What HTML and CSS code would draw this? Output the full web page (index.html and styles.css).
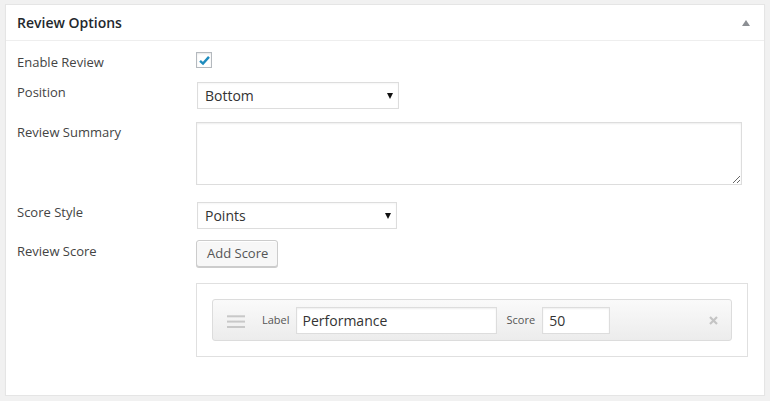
FILE: index.html
```html
<!DOCTYPE html>
<html lang="en">
<head>
<meta charset="utf-8">
<title>Review Options</title>
<link rel="stylesheet" href="styles.css">
</head>
<body>
<div class="panel">
  <div class="panel-head">
    <h2 class="panel-title">Review Options</h2>
    <span class="toggle" aria-hidden="true"></span>
  </div>
  <div class="panel-body">
    <div class="row row-check">
      <label class="lbl">Enable Review</label>
      <div class="field">
        <span class="checkbox">
          <svg width="14" height="14" viewBox="0 0 14 14"><path d="M2.2 6.8 L5.4 9.8 L11.8 2.6" fill="none" stroke="#1e8cbe" stroke-width="2.6" stroke-linecap="butt" stroke-linejoin="miter"/></svg>
        </span>
      </div>
    </div>
    <div class="row row-select">
      <label class="lbl">Position</label>
      <div class="field">
        <div class="select select-wide"><select><option>Bottom</option></select></div>
      </div>
    </div>
    <div class="row row-text">
      <label class="lbl">Review Summary</label>
      <div class="field">
        <textarea class="summary"></textarea>
      </div>
    </div>
    <div class="row row-style">
      <label class="lbl">Score Style</label>
      <div class="field">
        <div class="select select-narrow"><select><option>Points</option></select></div>
      </div>
    </div>
    <div class="row row-button">
      <label class="lbl lbl-down">Review Score</label>
      <div class="field">
        <button class="btn" type="button">Add Score</button>
      </div>
    </div>
    <div class="row row-scores">
      <div class="spacer"></div>
      <div class="scores">
        <div class="score-item">
          <svg class="handle" width="18" height="13" viewBox="0 0 18 13"><rect x="0" y="0.3" width="18" height="2" fill="#c8c8c8"/><rect x="0" y="5.6" width="18" height="2" fill="#c8c8c8"/><rect x="0" y="11" width="18" height="2" fill="#c8c8c8"/></svg>
          <span class="small-lbl lbl-label">Label</span>
          <input class="inp inp-label" type="text" value="Performance">
          <span class="small-lbl lbl-score">Score</span>
          <input class="inp inp-score" type="text" value="50">
          <svg class="remove" width="9" height="9" viewBox="0 0 9 9"><path d="M1 1 L8 8 M8 1 L1 8" stroke="#c4c4c4" stroke-width="2.2" fill="none"/></svg>
        </div>
      </div>
    </div>
  </div>
</div>
</body>
</html>
```

FILE: styles.css
```css
html, body {
  margin: 0;
  padding: 0;
}
body {
  background: #f1f1f1;
  font-family: "Open Sans", "Noto Sans", sans-serif;
  color: #444;
  padding: 4px 5px 0 5px;
  width: 760px;
}
.panel {
  background: #fff;
  border: 1px solid #e5e5e5;
  box-shadow: 0 1px 1px rgba(0,0,0,0.04);
  box-sizing: border-box;
  width: 760px;
}
.panel-head {
  height: 35px;
  border-bottom: 1px solid #eee;
  display: flex;
  align-items: center;
  justify-content: space-between;
  padding: 0 14px 0 11px;
}
.panel-title {
  margin: 0;
  font-size: 14px;
  font-weight: 600;
  line-height: 35px;
  color: #23282d;
}
.toggle {
  width: 0;
  height: 0;
  border-left: 4px solid transparent;
  border-right: 4px solid transparent;
  border-bottom: 6px solid #8c8f94;
  margin-top: 1px;
}
.panel-body {
  padding: 11px 15px 38px 11px;
}
.row {
  display: grid;
  grid-template-columns: 179px 1fr;
  align-items: start;
}
.lbl {
  font-size: 13px;
  line-height: 18px;
  color: #444;
  padding-top: 1px;
}
.row-check { margin-bottom: 11px; }
.row-select { margin-bottom: 13px; }
.row-text { margin-bottom: 17px; }
.row-style { margin-bottom: 11px; }
.row-button { margin-bottom: 16px; }
.lbl-down { padding-top: 2px; }
.checkbox {
  display: flex;
  align-items: center;
  justify-content: center;
  width: 16px;
  height: 16px;
  box-sizing: border-box;
  border: 1px solid #b4b9be;
  background: #fff;
  box-shadow: inset 0 1px 2px rgba(0,0,0,0.1);
}
.checkbox svg {
  display: block;
  margin-left: 1px;
  margin-top: 1px;
}
.select {
  position: relative;
  margin-left: 1px;
  height: 27px;
}
.select-wide { width: 202px; }
.select-narrow { width: 200px; }
.select select {
  appearance: none;
  -webkit-appearance: none;
  width: 100%;
  height: 27px;
  box-sizing: border-box;
  border: 1px solid #ddd;
  background: #fff;
  font-family: "Open Sans", "Noto Sans", sans-serif;
  font-size: 14px;
  color: #333;
  padding: 0 24px 0 7px;
  margin: 0;
  border-radius: 0;
  box-shadow: inset 0 1px 2px rgba(0,0,0,0.04);
  outline: none;
}
.select::after {
  content: "";
  position: absolute;
  right: 6px;
  top: 11px;
  width: 0;
  height: 0;
  border-left: 3.5px solid transparent;
  border-right: 3.5px solid transparent;
  border-top: 6px solid #111;
}
.summary {
  display: block;
  width: 546px;
  height: 63px;
  box-sizing: border-box;
  border: 1px solid #ddd;
  box-shadow: inset 0 1px 2px rgba(0,0,0,0.07);
  margin: 0;
  padding: 4px;
  font-family: "Open Sans", "Noto Sans", sans-serif;
  font-size: 14px;
  resize: both;
}
.btn {
  display: block;
  height: 27px;
  width: 82px;
  box-sizing: border-box;
  padding: 0 10px;
  margin: 0;
  background: #f7f7f7;
  border: 1px solid #ccc;
  border-radius: 3px;
  box-shadow: inset 0 1px 0 #fff, 0 1px 0 #ccc;
  font-family: "Open Sans", "Noto Sans", sans-serif;
  font-size: 13px;
  line-height: 25px;
  color: #555;
  white-space: nowrap;
}
.scores {
  width: 552px;
  box-sizing: border-box;
  border: 1px solid #e0e0e0;
  padding: 15px;
}
.score-item {
  height: 42px;
  box-sizing: border-box;
  border: 1px solid #dcdcdc;
  border-radius: 3px;
  background: linear-gradient(#fafafa, #ececec);
  display: flex;
  align-items: center;
  padding: 0 13px 0 14px;
}
.handle {
  display: block;
  margin-top: 3px;
}
.small-lbl {
  font-size: 11px;
  color: #555;
  line-height: 16px;
}
.lbl-label { margin-left: 17px; margin-right: 6px; }
.lbl-score { margin-left: 10px; margin-right: 7px; }
.inp {
  height: 27px;
  box-sizing: border-box;
  border: 1px solid #ddd;
  background: #fff;
  box-shadow: inset 0 1px 2px rgba(0,0,0,0.07);
  font-family: "Open Sans", "Noto Sans", sans-serif;
  font-size: 14px;
  color: #333;
  padding: 0 6px;
  margin: 0;
  outline: none;
}
.inp-label { width: 201px; }
.inp-score { width: 68px; }
.remove {
  display: block;
  margin-left: auto;
}
```
